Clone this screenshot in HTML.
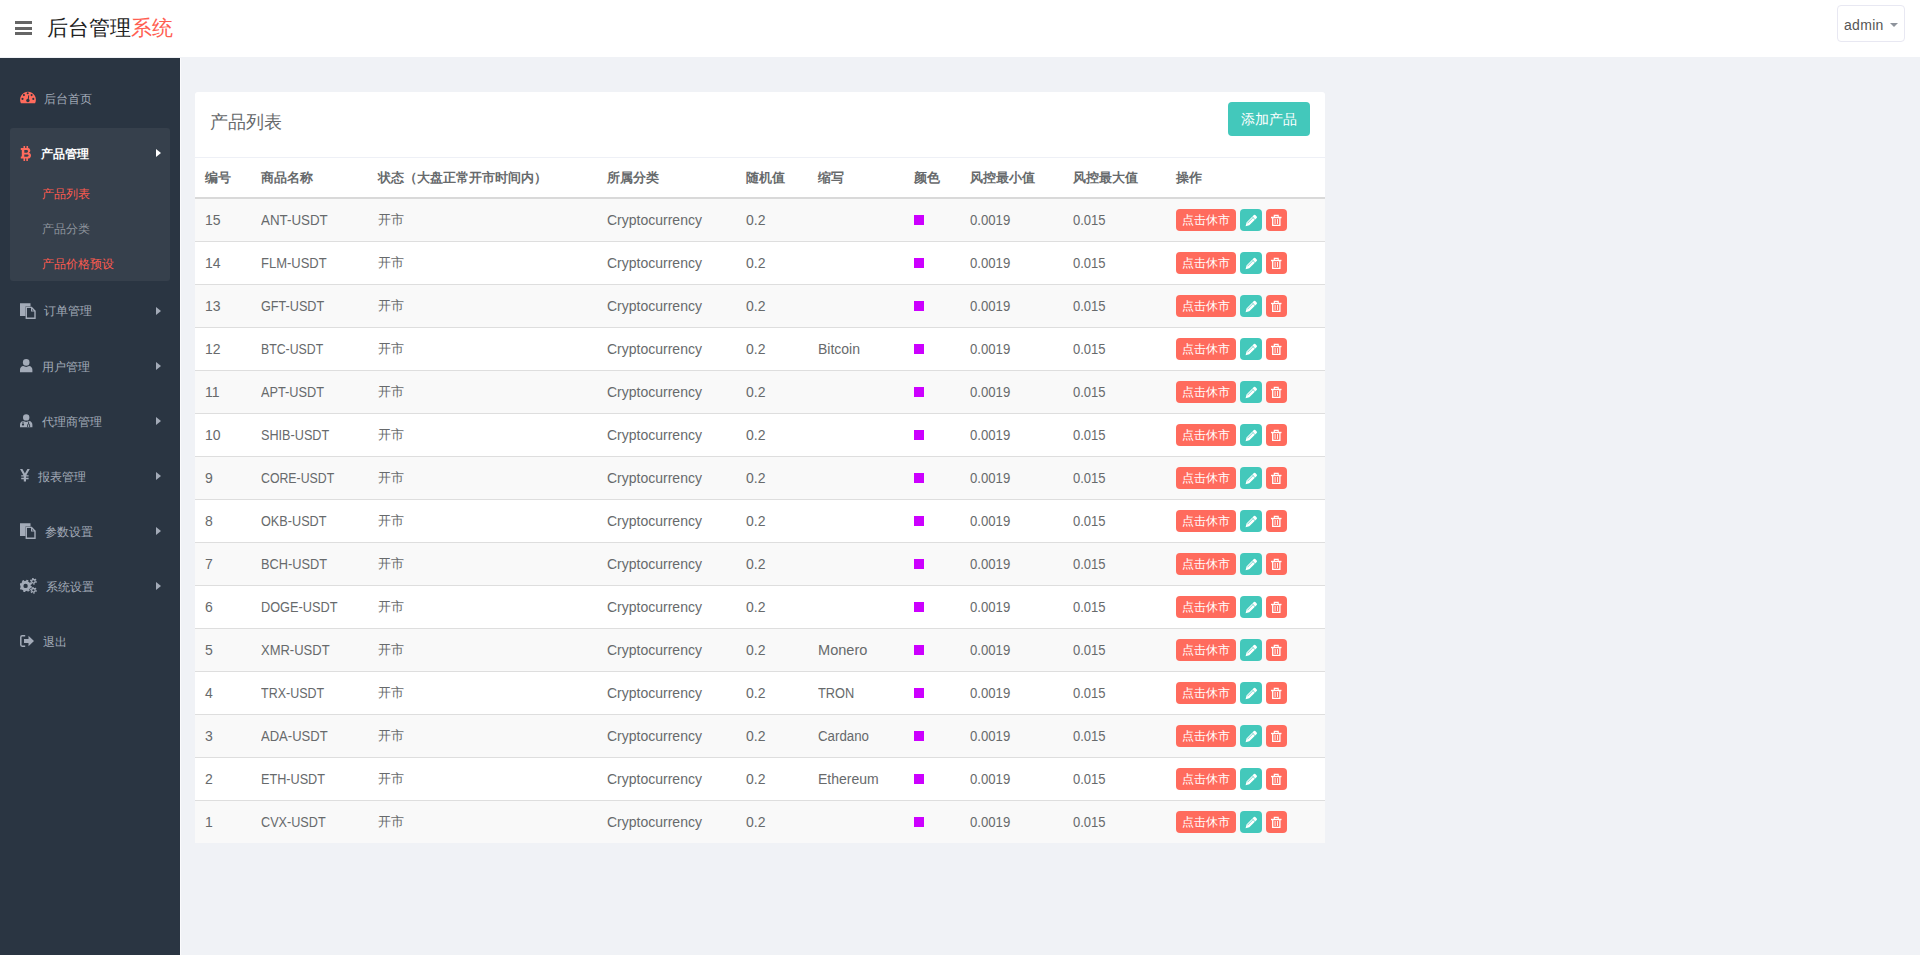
<!DOCTYPE html><html><head><meta charset="utf-8"><style>
*{box-sizing:border-box;margin:0;padding:0}
html,body{width:1920px;height:955px;overflow:hidden}
body{font-family:"Liberation Sans",sans-serif;background:#f0f2f6;color:#676a6c;font-size:14px;position:relative}
.hdr{position:absolute;left:0;top:0;width:1920px;height:57px;background:#fff}
.burger{position:absolute;left:15px;top:21px;width:17px;height:14px}
.burger i{position:absolute;left:0;width:17px;height:3px;background:#666}
.logo{position:absolute;left:47px;top:14px;font-size:21px;color:#222;font-weight:350;line-height:28px;white-space:nowrap}
.logo span{color:#ff5e52}
.user{position:absolute;left:1837px;top:5px;width:68px;height:37px;border:1px solid #e8e8f2;border-radius:4px;background:#fff}
.user .t{position:absolute;left:6px;top:11px;font-size:14px;color:#555;line-height:16px;letter-spacing:0.3px}
.user .c{position:absolute;left:52px;top:17px;width:0;height:0;border-left:4px solid transparent;border-right:4px solid transparent;border-top:4px solid #8e939c}
.side{position:absolute;left:0;top:58px;width:180px;height:897px;background:#2a3542}
.sep{position:absolute;left:180px;top:58px;width:1px;height:897px;background:#fbfbfd}
.grp{position:absolute;left:10px;top:128px;width:160px;height:153px;background:#36404c;border-radius:3px}
.tx{position:absolute;font-size:12px;line-height:16px;color:#a3abb8;white-space:nowrap}
.ic{position:absolute}
.car{position:absolute;left:156px;width:0;height:0;border-top:4px solid transparent;border-bottom:4px solid transparent;border-left:5px solid #a3abb8}
.red{color:#ff5b4f}
.card{position:absolute;left:195px;top:92px;width:1130px;height:751px;background:#fff;border-radius:3px 3px 0 0;overflow:hidden}
.ctitle{position:absolute;left:15px;top:19px;font-size:18px;line-height:22px;color:#676a6c}
.addbtn{position:absolute;left:1033px;top:10px;width:82px;height:34px;background:#43c8bb;border-radius:4px;color:#fff;font-size:14px;line-height:34px;text-align:center}
table{position:absolute;left:0;top:65px;width:1130px;border-collapse:separate;border-spacing:0;table-layout:fixed}
th,td{padding:0 10px;text-align:left;white-space:nowrap;vertical-align:middle}
th{height:42px;font-size:13px;font-weight:bold;color:#676a6c;border-top:1px solid #eef0f6;border-bottom:2px solid #d9d9d9}
td{height:43px;font-size:14px;border-bottom:1px solid #dedede;color:#676a6c}
tbody tr:nth-child(odd) td{background:#f9f9f9}
tbody tr:last-child td{border-bottom:0;height:42px}
.sw{display:inline-block;width:10px;height:10px;background:#cc00ff;vertical-align:middle;position:relative;top:-1px}
.sx{display:inline-block;transform-origin:0 50%}
.kai{font-size:13px}
.acts{position:relative;height:22px}
.b1{position:absolute;left:0;top:0;width:60px;height:22px;background:#ff6b5d;border-radius:4px;color:#fff;font-size:12px;line-height:22px;text-align:center}
.b2{position:absolute;left:64px;top:0;width:22px;height:22px;background:#43c8bb;border-radius:4px}
.b3{position:absolute;left:90px;top:0;width:21px;height:22px;background:#ff6b5d;border-radius:4px}
.b2 svg,.b3 svg{position:absolute;left:0;top:0}
</style></head><body>
<div class="hdr"><div class="burger"><i style="top:0"></i><i style="top:5.5px"></i><i style="top:11px"></i></div><div class="logo">后台管理<span>系统</span></div><div class="user"><span class="t">admin</span><span class="c"></span></div></div>
<div class="side"></div><div class="sep"></div><div class="grp"></div>
<div class="tx" style="left:44px;top:91px;">后台首页</div>
<svg class="ic" style="left:20px;top:91px" width="16" height="13" viewBox="0 0 16 13"><path d="M0.9 12.2 A7.9 7.9 0 1 1 15.1 12.2 Z" fill="#ff6b5d"/><g fill="#2a3542"><circle cx="3.9" cy="4.1" r="1.05"/><circle cx="7.7" cy="2.2" r="1.05"/><circle cx="11.6" cy="4.1" r="1.05"/><circle cx="2.5" cy="7.9" r="1.05"/><circle cx="13.3" cy="7.9" r="1.05"/><circle cx="7.9" cy="9.5" r="1.7"/><path d="M8.3 4.2 L9.2 4.4 L8.6 9.5 L7.6 9.3 Z"/></g></svg>
<div class="tx" style="left:41px;top:146px;color:#fff;font-weight:bold">产品管理</div>
<svg class="ic" style="left:20px;top:146px" width="12" height="15" viewBox="0 0 12 15"><path fill="#ff6b5d" fill-rule="evenodd" d="M3.5 0h1.6v2h1.4V0h1.6v2.1C9.6 2.4 10.3 3.4 10.3 4.6c0 1-.5 1.8-1.3 2.2 1.2.4 2 1.3 2 2.6 0 1.9-1.3 3-3.1 3.2V15H6.3v-2.4H5.1V15H3.5v-2.4H.8V10.6h1V4h-1V2h2.7z M4.3 4v2.7h2.4c.9 0 1.3-.6 1.3-1.35S7.6 4 6.7 4z M4.3 8.4v2.4h2.8c1 0 1.5-.5 1.5-1.2s-.5-1.2-1.5-1.2z"/></svg>
<div class="car" style="top:149px;border-left-color:#fff"></div>
<div class="tx" style="left:42px;top:186px;color:#ff5b4f;font-weight:500">产品列表</div>
<div class="tx" style="left:42px;top:221px;color:#8e949c">产品分类</div>
<div class="tx" style="left:42px;top:256px;color:#ff5b4f;font-weight:500">产品价格预设</div>
<div class="tx" style="left:44px;top:303px;">订单管理</div>
<svg class="ic" style="left:20px;top:303px" width="16" height="16" viewBox="0 0 16 16"><path fill="#a3abb8" d="M0 0.3h10.5v3.2H5.5v9.5H0z"/><path fill="none" stroke="#a3abb8" stroke-width="1.4" d="M6.3 4.4h5.2l3.5 3.6v7.3H6.3z"/><path fill="#a3abb8" d="M11 4.4h1v3.2h3v1h-4z"/></svg>
<div class="car" style="top:307px;border-left-color:#a3abb8"></div>
<div class="tx" style="left:42px;top:359px;">用户管理</div>
<svg class="ic" style="left:20px;top:359px" width="13" height="14" viewBox="0 0 13 14"><circle cx="6.2" cy="3.4" r="3.3" fill="#a3abb8"/><path fill="#a3abb8" d="M0 13.3 V10.8 C0 8.7 1.4 7.3 3.3 7.1 C4.1 7.6 5.1 7.9 6.2 7.9 C7.3 7.9 8.3 7.6 9.1 7.1 C11 7.3 12.4 8.7 12.4 10.8 V13.3 Z"/></svg>
<div class="car" style="top:362px;border-left-color:#a3abb8"></div>
<div class="tx" style="left:42px;top:414px;">代理商管理</div>
<svg class="ic" style="left:20px;top:414px" width="13" height="14" viewBox="0 0 13 14"><circle cx="6.2" cy="3.4" r="3.2" fill="#a3abb8"/><path fill="#a3abb8" d="M0 13.3 V10.8 C0 8.7 1.4 7.3 3.3 7.1 C4.1 7.6 5.1 7.9 6.2 7.9 C7.3 7.9 8.3 7.6 9.1 7.1 C11 7.3 12.4 8.7 12.4 10.8 V13.3 Z"/><circle cx="3" cy="10.6" r="1.1" fill="#2a3542"/><path d="M3 7.5 V9.5 M8.6 7.6 V10 M7.6 13 V11 Q7.6 10 8.6 10 Q9.6 10 9.6 11 V13" stroke="#2a3542" stroke-width="0.9" fill="none"/></svg>
<div class="car" style="top:417px;border-left-color:#a3abb8"></div>
<div class="tx" style="left:38px;top:469px;">报表管理</div>
<svg class="ic" style="left:20px;top:469px" width="10" height="13" viewBox="0 0 10 13"><path fill="#a3abb8" d="M0 0h2.4l2.5 4.6L7.4 0h2.4L6.3 6.2h2.3v1.4H6v1.2h2.6v1.4H6V12.5H3.8V10.2H1.2V8.8h2.6V7.6H1.2V6.2h2.3z"/></svg>
<div class="car" style="top:472px;border-left-color:#a3abb8"></div>
<div class="tx" style="left:45px;top:524px;">参数设置</div>
<svg class="ic" style="left:20px;top:523px" width="16" height="16" viewBox="0 0 16 16"><path fill="#a3abb8" d="M0 0.3h10.5v3.2H5.5v9.5H0z"/><path fill="none" stroke="#a3abb8" stroke-width="1.4" d="M6.3 4.4h5.2l3.5 3.6v7.3H6.3z"/><path fill="#a3abb8" d="M11 4.4h1v3.2h3v1h-4z"/></svg>
<div class="car" style="top:527px;border-left-color:#a3abb8"></div>
<div class="tx" style="left:46px;top:579px;">系统设置</div>
<svg class="ic" style="left:20px;top:578px" width="17" height="16" viewBox="0 0 17 16"><circle cx="5.6" cy="7.9" r="3.7" fill="none" stroke="#a3abb8" stroke-width="3.0"/><circle cx="5.6" cy="7.9" r="5.3" fill="none" stroke="#a3abb8" stroke-width="1.8" stroke-dasharray="2.1 2.06"/><circle cx="13.4" cy="3.3" r="1.8" fill="none" stroke="#a3abb8" stroke-width="1.3"/><circle cx="13.4" cy="3.3" r="2.8" fill="none" stroke="#a3abb8" stroke-width="1.2" stroke-dasharray="1.5 1.4"/><circle cx="13.4" cy="12.3" r="1.8" fill="none" stroke="#a3abb8" stroke-width="1.3"/><circle cx="13.4" cy="12.3" r="2.8" fill="none" stroke="#a3abb8" stroke-width="1.2" stroke-dasharray="1.5 1.4"/></svg>
<div class="car" style="top:582px;border-left-color:#a3abb8"></div>
<div class="tx" style="left:43px;top:634px;">退出</div>
<svg class="ic" style="left:20px;top:635px" width="15" height="13" viewBox="0 0 15 13"><path fill="none" stroke="#a3abb8" stroke-width="1.5" d="M5.2 0.8H2.2Q0.8 0.8 0.8 2.2V9.8Q0.8 11.2 2.2 11.2H5.2"/><path fill="#a3abb8" d="M4 4h4.5V0.7L14 6l-5.5 5.3V8H4z"/></svg>
<div class="card"><div class="ctitle">产品列表</div><div class="addbtn">添加产品</div>
<table><colgroup><col style="width:56px"><col style="width:117px"><col style="width:229px"><col style="width:139px"><col style="width:72px"><col style="width:96px"><col style="width:56px"><col style="width:103px"><col style="width:103px"><col style="width:159px"></colgroup>
<thead><tr><th>编号</th><th>商品名称</th><th>状态（大盘正常开市时间内）</th><th>所属分类</th><th>随机值</th><th>缩写</th><th>颜色</th><th>风控最小值</th><th>风控最大值</th><th>操作</th></tr></thead><tbody>
<tr><td>15</td><td><span class="sx" style="transform:scaleX(0.953)">ANT-USDT</span></td><td><span class="kai">开市</span></td><td>Cryptocurrency</td><td>0.2</td><td><span class="sx" style="transform:scaleX(1.0)"></span></td><td><span class="sw"></span></td><td><span class="sx" style="transform:scaleX(0.94)">0.0019</span></td><td><span class="sx" style="transform:scaleX(0.93)">0.015</span></td><td><div class="acts"><span class="b1">点击休市</span><span class="b2"><svg width="22" height="22" viewBox="0 0 22 22"><path fill="#fff" d="M5.6 17.3 L6.5 13.5 L13.9 6.1 Q14.6 5.4 15.3 6.1 L16.7 7.5 Q17.4 8.2 16.7 8.9 L9.3 16.3 Z"/><path stroke="#43c8bb" stroke-width="0.7" fill="none" d="M12.2 7.8 L15 10.6 M7.4 14.3 L13.2 8.5"/></svg></span><span class="b3"><svg width="21" height="22" viewBox="0 0 21 22"><g fill="none" stroke="#fff"><path stroke-width="1.4" d="M5 8.5 H15.5"/><path stroke-width="1.1" d="M8.3 8.3 V6.4 H12.2 V8.3"/><path stroke-width="1.3" d="M6.7 9 V16.4 H13.9 V9"/><path stroke-width="0.9" d="M9.1 10 V15 M11.5 10 V15"/></g></svg></span></div></td></tr>
<tr><td>14</td><td><span class="sx" style="transform:scaleX(0.927)">FLM-USDT</span></td><td><span class="kai">开市</span></td><td>Cryptocurrency</td><td>0.2</td><td><span class="sx" style="transform:scaleX(1.0)"></span></td><td><span class="sw"></span></td><td><span class="sx" style="transform:scaleX(0.94)">0.0019</span></td><td><span class="sx" style="transform:scaleX(0.93)">0.015</span></td><td><div class="acts"><span class="b1">点击休市</span><span class="b2"><svg width="22" height="22" viewBox="0 0 22 22"><path fill="#fff" d="M5.6 17.3 L6.5 13.5 L13.9 6.1 Q14.6 5.4 15.3 6.1 L16.7 7.5 Q17.4 8.2 16.7 8.9 L9.3 16.3 Z"/><path stroke="#43c8bb" stroke-width="0.7" fill="none" d="M12.2 7.8 L15 10.6 M7.4 14.3 L13.2 8.5"/></svg></span><span class="b3"><svg width="21" height="22" viewBox="0 0 21 22"><g fill="none" stroke="#fff"><path stroke-width="1.4" d="M5 8.5 H15.5"/><path stroke-width="1.1" d="M8.3 8.3 V6.4 H12.2 V8.3"/><path stroke-width="1.3" d="M6.7 9 V16.4 H13.9 V9"/><path stroke-width="0.9" d="M9.1 10 V15 M11.5 10 V15"/></g></svg></span></div></td></tr>
<tr><td>13</td><td><span class="sx" style="transform:scaleX(0.903)">GFT-USDT</span></td><td><span class="kai">开市</span></td><td>Cryptocurrency</td><td>0.2</td><td><span class="sx" style="transform:scaleX(1.0)"></span></td><td><span class="sw"></span></td><td><span class="sx" style="transform:scaleX(0.94)">0.0019</span></td><td><span class="sx" style="transform:scaleX(0.93)">0.015</span></td><td><div class="acts"><span class="b1">点击休市</span><span class="b2"><svg width="22" height="22" viewBox="0 0 22 22"><path fill="#fff" d="M5.6 17.3 L6.5 13.5 L13.9 6.1 Q14.6 5.4 15.3 6.1 L16.7 7.5 Q17.4 8.2 16.7 8.9 L9.3 16.3 Z"/><path stroke="#43c8bb" stroke-width="0.7" fill="none" d="M12.2 7.8 L15 10.6 M7.4 14.3 L13.2 8.5"/></svg></span><span class="b3"><svg width="21" height="22" viewBox="0 0 21 22"><g fill="none" stroke="#fff"><path stroke-width="1.4" d="M5 8.5 H15.5"/><path stroke-width="1.1" d="M8.3 8.3 V6.4 H12.2 V8.3"/><path stroke-width="1.3" d="M6.7 9 V16.4 H13.9 V9"/><path stroke-width="0.9" d="M9.1 10 V15 M11.5 10 V15"/></g></svg></span></div></td></tr>
<tr><td>12</td><td><span class="sx" style="transform:scaleX(0.879)">BTC-USDT</span></td><td><span class="kai">开市</span></td><td>Cryptocurrency</td><td>0.2</td><td><span class="sx" style="transform:scaleX(1.0)">Bitcoin</span></td><td><span class="sw"></span></td><td><span class="sx" style="transform:scaleX(0.94)">0.0019</span></td><td><span class="sx" style="transform:scaleX(0.93)">0.015</span></td><td><div class="acts"><span class="b1">点击休市</span><span class="b2"><svg width="22" height="22" viewBox="0 0 22 22"><path fill="#fff" d="M5.6 17.3 L6.5 13.5 L13.9 6.1 Q14.6 5.4 15.3 6.1 L16.7 7.5 Q17.4 8.2 16.7 8.9 L9.3 16.3 Z"/><path stroke="#43c8bb" stroke-width="0.7" fill="none" d="M12.2 7.8 L15 10.6 M7.4 14.3 L13.2 8.5"/></svg></span><span class="b3"><svg width="21" height="22" viewBox="0 0 21 22"><g fill="none" stroke="#fff"><path stroke-width="1.4" d="M5 8.5 H15.5"/><path stroke-width="1.1" d="M8.3 8.3 V6.4 H12.2 V8.3"/><path stroke-width="1.3" d="M6.7 9 V16.4 H13.9 V9"/><path stroke-width="0.9" d="M9.1 10 V15 M11.5 10 V15"/></g></svg></span></div></td></tr>
<tr><td>11</td><td><span class="sx" style="transform:scaleX(0.911)">APT-USDT</span></td><td><span class="kai">开市</span></td><td>Cryptocurrency</td><td>0.2</td><td><span class="sx" style="transform:scaleX(1.0)"></span></td><td><span class="sw"></span></td><td><span class="sx" style="transform:scaleX(0.94)">0.0019</span></td><td><span class="sx" style="transform:scaleX(0.93)">0.015</span></td><td><div class="acts"><span class="b1">点击休市</span><span class="b2"><svg width="22" height="22" viewBox="0 0 22 22"><path fill="#fff" d="M5.6 17.3 L6.5 13.5 L13.9 6.1 Q14.6 5.4 15.3 6.1 L16.7 7.5 Q17.4 8.2 16.7 8.9 L9.3 16.3 Z"/><path stroke="#43c8bb" stroke-width="0.7" fill="none" d="M12.2 7.8 L15 10.6 M7.4 14.3 L13.2 8.5"/></svg></span><span class="b3"><svg width="21" height="22" viewBox="0 0 21 22"><g fill="none" stroke="#fff"><path stroke-width="1.4" d="M5 8.5 H15.5"/><path stroke-width="1.1" d="M8.3 8.3 V6.4 H12.2 V8.3"/><path stroke-width="1.3" d="M6.7 9 V16.4 H13.9 V9"/><path stroke-width="0.9" d="M9.1 10 V15 M11.5 10 V15"/></g></svg></span></div></td></tr>
<tr><td>10</td><td><span class="sx" style="transform:scaleX(0.904)">SHIB-USDT</span></td><td><span class="kai">开市</span></td><td>Cryptocurrency</td><td>0.2</td><td><span class="sx" style="transform:scaleX(1.0)"></span></td><td><span class="sw"></span></td><td><span class="sx" style="transform:scaleX(0.94)">0.0019</span></td><td><span class="sx" style="transform:scaleX(0.93)">0.015</span></td><td><div class="acts"><span class="b1">点击休市</span><span class="b2"><svg width="22" height="22" viewBox="0 0 22 22"><path fill="#fff" d="M5.6 17.3 L6.5 13.5 L13.9 6.1 Q14.6 5.4 15.3 6.1 L16.7 7.5 Q17.4 8.2 16.7 8.9 L9.3 16.3 Z"/><path stroke="#43c8bb" stroke-width="0.7" fill="none" d="M12.2 7.8 L15 10.6 M7.4 14.3 L13.2 8.5"/></svg></span><span class="b3"><svg width="21" height="22" viewBox="0 0 21 22"><g fill="none" stroke="#fff"><path stroke-width="1.4" d="M5 8.5 H15.5"/><path stroke-width="1.1" d="M8.3 8.3 V6.4 H12.2 V8.3"/><path stroke-width="1.3" d="M6.7 9 V16.4 H13.9 V9"/><path stroke-width="0.9" d="M9.1 10 V15 M11.5 10 V15"/></g></svg></span></div></td></tr>
<tr><td>9</td><td><span class="sx" style="transform:scaleX(0.879)">CORE-USDT</span></td><td><span class="kai">开市</span></td><td>Cryptocurrency</td><td>0.2</td><td><span class="sx" style="transform:scaleX(1.0)"></span></td><td><span class="sw"></span></td><td><span class="sx" style="transform:scaleX(0.94)">0.0019</span></td><td><span class="sx" style="transform:scaleX(0.93)">0.015</span></td><td><div class="acts"><span class="b1">点击休市</span><span class="b2"><svg width="22" height="22" viewBox="0 0 22 22"><path fill="#fff" d="M5.6 17.3 L6.5 13.5 L13.9 6.1 Q14.6 5.4 15.3 6.1 L16.7 7.5 Q17.4 8.2 16.7 8.9 L9.3 16.3 Z"/><path stroke="#43c8bb" stroke-width="0.7" fill="none" d="M12.2 7.8 L15 10.6 M7.4 14.3 L13.2 8.5"/></svg></span><span class="b3"><svg width="21" height="22" viewBox="0 0 21 22"><g fill="none" stroke="#fff"><path stroke-width="1.4" d="M5 8.5 H15.5"/><path stroke-width="1.1" d="M8.3 8.3 V6.4 H12.2 V8.3"/><path stroke-width="1.3" d="M6.7 9 V16.4 H13.9 V9"/><path stroke-width="0.9" d="M9.1 10 V15 M11.5 10 V15"/></g></svg></span></div></td></tr>
<tr><td>8</td><td><span class="sx" style="transform:scaleX(0.905)">OKB-USDT</span></td><td><span class="kai">开市</span></td><td>Cryptocurrency</td><td>0.2</td><td><span class="sx" style="transform:scaleX(1.0)"></span></td><td><span class="sw"></span></td><td><span class="sx" style="transform:scaleX(0.94)">0.0019</span></td><td><span class="sx" style="transform:scaleX(0.93)">0.015</span></td><td><div class="acts"><span class="b1">点击休市</span><span class="b2"><svg width="22" height="22" viewBox="0 0 22 22"><path fill="#fff" d="M5.6 17.3 L6.5 13.5 L13.9 6.1 Q14.6 5.4 15.3 6.1 L16.7 7.5 Q17.4 8.2 16.7 8.9 L9.3 16.3 Z"/><path stroke="#43c8bb" stroke-width="0.7" fill="none" d="M12.2 7.8 L15 10.6 M7.4 14.3 L13.2 8.5"/></svg></span><span class="b3"><svg width="21" height="22" viewBox="0 0 21 22"><g fill="none" stroke="#fff"><path stroke-width="1.4" d="M5 8.5 H15.5"/><path stroke-width="1.1" d="M8.3 8.3 V6.4 H12.2 V8.3"/><path stroke-width="1.3" d="M6.7 9 V16.4 H13.9 V9"/><path stroke-width="0.9" d="M9.1 10 V15 M11.5 10 V15"/></g></svg></span></div></td></tr>
<tr><td>7</td><td><span class="sx" style="transform:scaleX(0.913)">BCH-USDT</span></td><td><span class="kai">开市</span></td><td>Cryptocurrency</td><td>0.2</td><td><span class="sx" style="transform:scaleX(1.0)"></span></td><td><span class="sw"></span></td><td><span class="sx" style="transform:scaleX(0.94)">0.0019</span></td><td><span class="sx" style="transform:scaleX(0.93)">0.015</span></td><td><div class="acts"><span class="b1">点击休市</span><span class="b2"><svg width="22" height="22" viewBox="0 0 22 22"><path fill="#fff" d="M5.6 17.3 L6.5 13.5 L13.9 6.1 Q14.6 5.4 15.3 6.1 L16.7 7.5 Q17.4 8.2 16.7 8.9 L9.3 16.3 Z"/><path stroke="#43c8bb" stroke-width="0.7" fill="none" d="M12.2 7.8 L15 10.6 M7.4 14.3 L13.2 8.5"/></svg></span><span class="b3"><svg width="21" height="22" viewBox="0 0 21 22"><g fill="none" stroke="#fff"><path stroke-width="1.4" d="M5 8.5 H15.5"/><path stroke-width="1.1" d="M8.3 8.3 V6.4 H12.2 V8.3"/><path stroke-width="1.3" d="M6.7 9 V16.4 H13.9 V9"/><path stroke-width="0.9" d="M9.1 10 V15 M11.5 10 V15"/></g></svg></span></div></td></tr>
<tr><td>6</td><td><span class="sx" style="transform:scaleX(0.910)">DOGE-USDT</span></td><td><span class="kai">开市</span></td><td>Cryptocurrency</td><td>0.2</td><td><span class="sx" style="transform:scaleX(1.0)"></span></td><td><span class="sw"></span></td><td><span class="sx" style="transform:scaleX(0.94)">0.0019</span></td><td><span class="sx" style="transform:scaleX(0.93)">0.015</span></td><td><div class="acts"><span class="b1">点击休市</span><span class="b2"><svg width="22" height="22" viewBox="0 0 22 22"><path fill="#fff" d="M5.6 17.3 L6.5 13.5 L13.9 6.1 Q14.6 5.4 15.3 6.1 L16.7 7.5 Q17.4 8.2 16.7 8.9 L9.3 16.3 Z"/><path stroke="#43c8bb" stroke-width="0.7" fill="none" d="M12.2 7.8 L15 10.6 M7.4 14.3 L13.2 8.5"/></svg></span><span class="b3"><svg width="21" height="22" viewBox="0 0 21 22"><g fill="none" stroke="#fff"><path stroke-width="1.4" d="M5 8.5 H15.5"/><path stroke-width="1.1" d="M8.3 8.3 V6.4 H12.2 V8.3"/><path stroke-width="1.3" d="M6.7 9 V16.4 H13.9 V9"/><path stroke-width="0.9" d="M9.1 10 V15 M11.5 10 V15"/></g></svg></span></div></td></tr>
<tr><td>5</td><td><span class="sx" style="transform:scaleX(0.928)">XMR-USDT</span></td><td><span class="kai">开市</span></td><td>Cryptocurrency</td><td>0.2</td><td><span class="sx" style="transform:scaleX(1.04)">Monero</span></td><td><span class="sw"></span></td><td><span class="sx" style="transform:scaleX(0.94)">0.0019</span></td><td><span class="sx" style="transform:scaleX(0.93)">0.015</span></td><td><div class="acts"><span class="b1">点击休市</span><span class="b2"><svg width="22" height="22" viewBox="0 0 22 22"><path fill="#fff" d="M5.6 17.3 L6.5 13.5 L13.9 6.1 Q14.6 5.4 15.3 6.1 L16.7 7.5 Q17.4 8.2 16.7 8.9 L9.3 16.3 Z"/><path stroke="#43c8bb" stroke-width="0.7" fill="none" d="M12.2 7.8 L15 10.6 M7.4 14.3 L13.2 8.5"/></svg></span><span class="b3"><svg width="21" height="22" viewBox="0 0 21 22"><g fill="none" stroke="#fff"><path stroke-width="1.4" d="M5 8.5 H15.5"/><path stroke-width="1.1" d="M8.3 8.3 V6.4 H12.2 V8.3"/><path stroke-width="1.3" d="M6.7 9 V16.4 H13.9 V9"/><path stroke-width="0.9" d="M9.1 10 V15 M11.5 10 V15"/></g></svg></span></div></td></tr>
<tr><td>4</td><td><span class="sx" style="transform:scaleX(0.892)">TRX-USDT</span></td><td><span class="kai">开市</span></td><td>Cryptocurrency</td><td>0.2</td><td><span class="sx" style="transform:scaleX(0.915)">TRON</span></td><td><span class="sw"></span></td><td><span class="sx" style="transform:scaleX(0.94)">0.0019</span></td><td><span class="sx" style="transform:scaleX(0.93)">0.015</span></td><td><div class="acts"><span class="b1">点击休市</span><span class="b2"><svg width="22" height="22" viewBox="0 0 22 22"><path fill="#fff" d="M5.6 17.3 L6.5 13.5 L13.9 6.1 Q14.6 5.4 15.3 6.1 L16.7 7.5 Q17.4 8.2 16.7 8.9 L9.3 16.3 Z"/><path stroke="#43c8bb" stroke-width="0.7" fill="none" d="M12.2 7.8 L15 10.6 M7.4 14.3 L13.2 8.5"/></svg></span><span class="b3"><svg width="21" height="22" viewBox="0 0 21 22"><g fill="none" stroke="#fff"><path stroke-width="1.4" d="M5 8.5 H15.5"/><path stroke-width="1.1" d="M8.3 8.3 V6.4 H12.2 V8.3"/><path stroke-width="1.3" d="M6.7 9 V16.4 H13.9 V9"/><path stroke-width="0.9" d="M9.1 10 V15 M11.5 10 V15"/></g></svg></span></div></td></tr>
<tr><td>3</td><td><span class="sx" style="transform:scaleX(0.931)">ADA-USDT</span></td><td><span class="kai">开市</span></td><td>Cryptocurrency</td><td>0.2</td><td><span class="sx" style="transform:scaleX(0.95)">Cardano</span></td><td><span class="sw"></span></td><td><span class="sx" style="transform:scaleX(0.94)">0.0019</span></td><td><span class="sx" style="transform:scaleX(0.93)">0.015</span></td><td><div class="acts"><span class="b1">点击休市</span><span class="b2"><svg width="22" height="22" viewBox="0 0 22 22"><path fill="#fff" d="M5.6 17.3 L6.5 13.5 L13.9 6.1 Q14.6 5.4 15.3 6.1 L16.7 7.5 Q17.4 8.2 16.7 8.9 L9.3 16.3 Z"/><path stroke="#43c8bb" stroke-width="0.7" fill="none" d="M12.2 7.8 L15 10.6 M7.4 14.3 L13.2 8.5"/></svg></span><span class="b3"><svg width="21" height="22" viewBox="0 0 21 22"><g fill="none" stroke="#fff"><path stroke-width="1.4" d="M5 8.5 H15.5"/><path stroke-width="1.1" d="M8.3 8.3 V6.4 H12.2 V8.3"/><path stroke-width="1.3" d="M6.7 9 V16.4 H13.9 V9"/><path stroke-width="0.9" d="M9.1 10 V15 M11.5 10 V15"/></g></svg></span></div></td></tr>
<tr><td>2</td><td><span class="sx" style="transform:scaleX(0.904)">ETH-USDT</span></td><td><span class="kai">开市</span></td><td>Cryptocurrency</td><td>0.2</td><td><span class="sx" style="transform:scaleX(1.0)">Ethereum</span></td><td><span class="sw"></span></td><td><span class="sx" style="transform:scaleX(0.94)">0.0019</span></td><td><span class="sx" style="transform:scaleX(0.93)">0.015</span></td><td><div class="acts"><span class="b1">点击休市</span><span class="b2"><svg width="22" height="22" viewBox="0 0 22 22"><path fill="#fff" d="M5.6 17.3 L6.5 13.5 L13.9 6.1 Q14.6 5.4 15.3 6.1 L16.7 7.5 Q17.4 8.2 16.7 8.9 L9.3 16.3 Z"/><path stroke="#43c8bb" stroke-width="0.7" fill="none" d="M12.2 7.8 L15 10.6 M7.4 14.3 L13.2 8.5"/></svg></span><span class="b3"><svg width="21" height="22" viewBox="0 0 21 22"><g fill="none" stroke="#fff"><path stroke-width="1.4" d="M5 8.5 H15.5"/><path stroke-width="1.1" d="M8.3 8.3 V6.4 H12.2 V8.3"/><path stroke-width="1.3" d="M6.7 9 V16.4 H13.9 V9"/><path stroke-width="0.9" d="M9.1 10 V15 M11.5 10 V15"/></g></svg></span></div></td></tr>
<tr><td>1</td><td><span class="sx" style="transform:scaleX(0.903)">CVX-USDT</span></td><td><span class="kai">开市</span></td><td>Cryptocurrency</td><td>0.2</td><td><span class="sx" style="transform:scaleX(1.0)"></span></td><td><span class="sw"></span></td><td><span class="sx" style="transform:scaleX(0.94)">0.0019</span></td><td><span class="sx" style="transform:scaleX(0.93)">0.015</span></td><td><div class="acts"><span class="b1">点击休市</span><span class="b2"><svg width="22" height="22" viewBox="0 0 22 22"><path fill="#fff" d="M5.6 17.3 L6.5 13.5 L13.9 6.1 Q14.6 5.4 15.3 6.1 L16.7 7.5 Q17.4 8.2 16.7 8.9 L9.3 16.3 Z"/><path stroke="#43c8bb" stroke-width="0.7" fill="none" d="M12.2 7.8 L15 10.6 M7.4 14.3 L13.2 8.5"/></svg></span><span class="b3"><svg width="21" height="22" viewBox="0 0 21 22"><g fill="none" stroke="#fff"><path stroke-width="1.4" d="M5 8.5 H15.5"/><path stroke-width="1.1" d="M8.3 8.3 V6.4 H12.2 V8.3"/><path stroke-width="1.3" d="M6.7 9 V16.4 H13.9 V9"/><path stroke-width="0.9" d="M9.1 10 V15 M11.5 10 V15"/></g></svg></span></div></td></tr>
</tbody></table></div>
</body></html>
